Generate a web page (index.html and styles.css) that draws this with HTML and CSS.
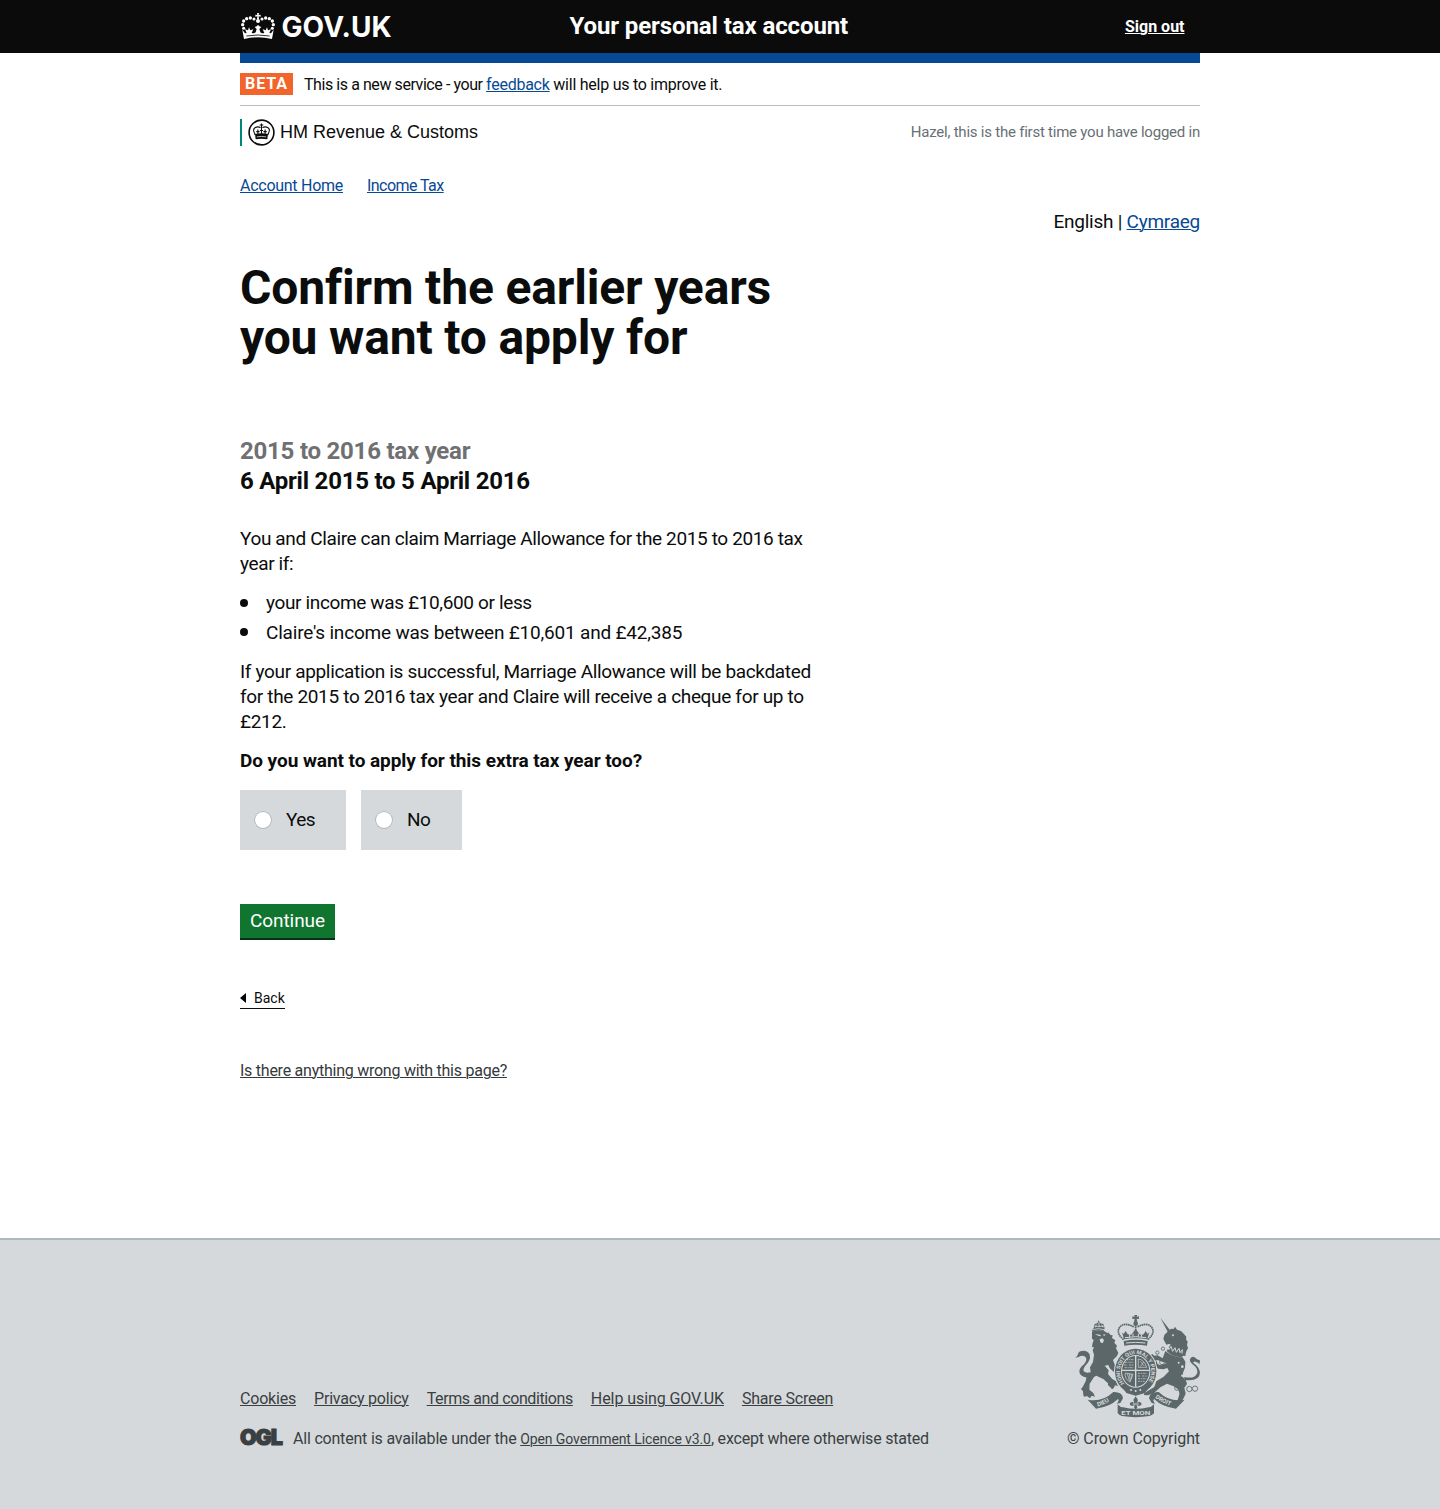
FILE: index.html
```html
<!DOCTYPE html>
<html lang="en">
<head>
<meta charset="utf-8">
<title>Confirm the earlier years you want to apply for</title>
<link rel="stylesheet" href="styles.css">
</head>
<body>
<header class="header">
  <div class="wrap header-inner">
    <a class="logo" href="#">
      <svg class="logo-crown" viewBox="32 39 102 78" aria-hidden="true">
        <defs>
          <g id="crown-half">
            <circle cx="71" cy="57" r="4.6"/><circle cx="60" cy="54" r="5"/><circle cx="49" cy="56" r="5"/><circle cx="40" cy="63" r="5"/><circle cx="37" cy="74" r="5"/><circle cx="40" cy="85" r="4.6"/>
            <path d="M83.500 76q-3.500 0-4.500 3l-6 2 6 6-3 10q-4 4-12 2l5-11-9 3-4-9-3 9-9-3 5 11-5 1-8-11 5 28q21-5 42.500-5z"/>
          </g>
        </defs>
        <g fill="#fff">
          <circle cx="83" cy="63" r="6"/><path d="M80 39h6l-1 6 6-1v6l-6-1 1 9h-6l1-9-6 1v-6l6 1z"/>
          <use href="#crown-half"/>
          <use href="#crown-half" transform="translate(166 0) scale(-1 1)"/>
        </g>
        <path d="M48 108q35-6 70 0" fill="none" stroke="#0b0c0c" stroke-width="2.5"/>
      </svg>
      <span class="logo-text">GOV.UK</span>
    </a>
    <span class="service-name">Your personal tax account</span>
    <a class="sign-out" href="#">Sign out</a>
  </div>
</header>

<div class="wrap">
  <div class="blue-bar"></div>
  <div class="phase">
    <strong class="phase-tag">BETA</strong>
    <span class="phase-text"><span class="phase-lead">This is a new service - your </span><a href="#">feedback</a> will help us to improve it.</span>
  </div>
  <div class="org-row">
    <div class="org">
      <svg class="org-crest" viewBox="0 0 27 27" aria-hidden="true">
        <circle cx="13.5" cy="13.5" r="12.4" fill="none" stroke="#0b0c0c" stroke-width="1.6"/>
        <g fill="none" stroke="#0b0c0c" stroke-width="1.1">
          <path d="M12.6 8.500C8.500 6.800 5 9 5.700 12c.3 1.600 1.100 2.600 1.500 4M14.400 8.500c4.100-1.700 7.600.5 6.900 3.500-.3 1.600-1.100 2.600-1.500 4"/>
          <path d="M13.500 4.500v12M11.700 6h3.600M9.900 10.500v5M17.100 10.500v5M8.300 12.600h3.200M15.500 12.600h3.200M11.900 11.500h3.200"/>
        </g>
        <path d="M7 15q6.500-1.500 13 0l-.7 5.200q-5.800-1-11.600 0z" fill="#0b0c0c"/>
        <path d="M8.800 17.900q4.700-1 9.400 0" fill="none" stroke="#fff" stroke-width=".7"/>
      </svg>
      <span class="org-name">HM Revenue &amp; Customs</span>
    </div>
    <span class="last-login">Hazel, this is the first time you have logged in</span>
  </div>
  <nav class="account-nav">
    <a class="nav-home" href="#">Account Home</a>
    <a class="nav-tax" href="#">Income Tax</a>
  </nav>
  <div class="languages">English | <a href="#">Cymraeg</a></div>

  <main class="content">
    <h1 class="title">Confirm the earlier years you want to apply for</h1>
    <h2 class="year"><span class="year-label">2015 to 2016 tax year</span>6 April 2015 to 5 April 2016</h2>
    <p class="text intro">You and Claire can claim Marriage Allowance for the 2015 to 2016 tax year if:</p>
    <ul class="list">
      <li class="item-own">your income was £10,600 or less</li>
      <li class="item-partner">Claire's income was between £10,601 and £42,385</li>
    </ul>
    <p class="text outcome">If your application is successful, Marriage Allowance will be backdated for the 2015 to 2016 tax year and Claire will receive a cheque for up to £212.</p>
    <p class="question">Do you want to apply for this extra tax year too?</p>
    <div class="choices">
      <label class="choice choice-yes"><input class="radio" type="radio" name="extra">Yes</label>
      <label class="choice choice-no"><input class="radio" type="radio" name="extra">No</label>
    </div>
    <button class="button">Continue</button>
    <div class="back-row"><a class="back" href="#"><svg class="back-arrow" viewBox="0 0 6 10" aria-hidden="true"><path d="M6 0v10L0 5z"/></svg>Back</a></div>
    <div class="problem"><a href="#">Is there anything wrong with this page?</a></div>
  </main>
</div>

<footer class="footer">
  <div class="wrap footer-inner">
    <div>
      <nav class="footer-links">
        <a href="#">Cookies</a>
        <a href="#">Privacy policy</a>
        <a class="terms" href="#">Terms and conditions</a>
        <a class="help" href="#">Help using GOV.UK</a>
        <a href="#">Share Screen</a>
      </nav>
      <div class="licence">
        <span class="ogl">OGL</span>
        <span>All content is available under the <a class="licence-link" href="#">Open Government Licence v3.0</a>, except where otherwise stated</span>
      </div>
    </div>
    <div class="copyright">
      <svg class="arms" viewBox="75 42 375 309" aria-hidden="true">
        <defs>
          <path id="garter" d="M223 247A47 52 0 1 1 291 247"/>
          <path id="ribbon-left" d="M143 316Q168 311 196 287"/>
          <path id="ribbon-right" d="M315 290Q344 311 374 318"/>
        </defs>
        <!-- lion -->
        <g class="ink">
          <path d="M126 88l5-7 3-12 8-2 4-9 5 9 9 2 4 12-3 9q-17-5-33 2z"/>
          <path d="M126 92q18-8 38-1l9 6 2-3 6 8 7 1-2 8 10 7-3 7 8 9-3 8 7 14-4 9-12 12 5 14q8 6 8 14l-7-2q4 7 0 13l-10-9q-8-6-10-15l-11 2 12 14-2 11 12 14 12 8 6 15-9-3q-2 9-9 12l-6-8q-7-1-6-10l-14-13-21-10-7 4-13 20-1 18 12 10 5 11-10-3-5 8-9-7q-9 5-11-2l-1-12-6-7 5-6 9-17 3-15 12-12-2-15 9-16 3-22-4-13 4-10-6 1 1-9 4-13-5-4z"/>
          <path d="M122 228q-21 5-32-9-6-12 6-24 14-12 13-22-4-11-17-8-8 5-16 5 7-5 8-11 2-9 12-9 13-4 21 7 8 13-4 29-16 17-12 25 7 7 20 3z"/>
        </g>
        <g class="paper">
          <path d="M135 99l15 2 4 5-10-2zM158 101l9-1-4 5zM149 115l8-3 5 5-4 10-7-3z"/>
          <path class="line" d="M134 76h28M139 71l-3 8M147 63v16M155 71l4 8M128 86q17-6 35 0" fill="none"/>
        </g>
        <!-- unicorn -->
        <g class="ink">
          <path d="M331 50l31 40-7 6z"/>
          <path d="M340 114l3-12 12-12 8-7 8 1 4-7 6 9 12 4 8 8 8 9-1 8 5 7-2 10 3 9-6 12-2 12-7-1-3 4q-28 2-46-18l12-20-6-1-7 2z"/>
          <path d="M346 150q24 20 52 19l8 13-1 18-6 15-1 12 10 12 3 10-8 11 4 18-7 15-12 17-11 1 7-17 5-17-5-12-13-9-20-8-20 11-18 16-19 8-12-1 1-8 15-7 15-9 6-17 22-14 16-16-5-10-12 4-16-2-8-10 2-16 5 12 8 4 18-6-12-5-15-5-8 2-8-8-9 0-3-7 9-1 3-5 7 6 10-1 15 9z"/>
          <path d="M403 228q32 7 39-13 1-14-11-22-13-10-11-18 4-11 14-6 6 8 17 10-5 10 0 15-5-11-14-12-8-2-7 4 16 10 20 27 0 30-47 24z"/>
        </g>
        <g fill="none" class="ring">
          <circle cx="381" cy="261" r="7"/><circle cx="395" cy="274" r="6"/><circle cx="418" cy="264" r="8"/><circle cx="435" cy="263" r="8"/>
          <circle cx="336" cy="184" r="7"/><circle cx="322" cy="155" r="5"/><circle cx="339" cy="143" r="5"/>
        </g>
        <path class="thin" d="M349 143l2-10 6 13 6-10 5 15 7-11 4 14 8-12 3 13 7-9-1 12" fill="none"/>
        <g class="paper">
          <circle cx="369" cy="103" r="3"/><circle cx="397" cy="197" r="4"/><circle cx="397" cy="224" r="3.500"/><circle cx="386" cy="185" r="3"/>
        </g>
        <!-- crown -->
        <g class="ink">
          <path d="M253 42h9l-2 6 7-2v8l-7-1 2 9h-10l2-9-7 1v-8l7 2z"/>
          <circle cx="257" cy="68" r="7"/>
          <path d="M216 94l6 21q35-7 70 0l6-21-5 5-6-9-6 10-11 1-6-8-7-9-7 9-6 8-11-1-6-10-6 9z"/>
          <path d="M221 120q36-7 72 0l-2 14q-34-6-68 0z"/>
        </g>
        <g fill="none" class="beads">
          <path d="M221 116Q201 100 206 84q10-20 35-11l12 5"/>
          <path d="M293 116q20-16 15-32-10-20-35-11l-12 5"/>
          <path d="M257 76v20"/>
        </g>
        <path class="thin" d="M225 110q32-6 64 0M239 97v12M275 97v12M249 98v9M265 98v9M228 126q29-4 58 0" fill="none"/>
        <!-- garter and shield -->
        <ellipse class="paper" cx="257" cy="211" rx="65" ry="71"/>
        <ellipse class="ink" cx="257" cy="211" rx="62" ry="68"/>
        <ellipse class="paper" cx="257" cy="211" rx="44" ry="49"/>
        <ellipse class="ink" cx="257" cy="211" rx="41" ry="46"/>
        <g fill="none" class="paper-line">
          <path d="M257 165v92M216 208h82" stroke-width="4"/>
          <path d="M224 184h28M222 192h10M237 192h15M228 176h24M224 200h28M264 217h28M263 225h9M276 225h16M264 233h25M264 241h20" stroke-width="2" stroke-dasharray="7 2 3 2"/>
          <path d="M265 174q18 2 25 25h-25zM271 181l12 14M281 183l-10 14" stroke-width="2"/>
          <path d="M226 216q-3 18 14 27l9-23zM232 218l6 20M238 218l3 22M244 219v15" stroke-width="2"/>
        </g>
        <path class="ink" d="M221 250l10 18 26 8 26-8 10-18 6 6-14 20-28 8-28-8-14-20z"/>
        <circle class="paper" cx="243" cy="267" r="3"/><circle class="paper" cx="257" cy="270" r="3"/><circle class="paper" cx="271" cy="267" r="3"/>
        <text class="motto garter-text" textLength="226" lengthAdjust="spacingAndGlyphs"><textPath href="#garter" textLength="226" lengthAdjust="spacingAndGlyphs">HONI SOIT QUI MAL Y PENSE</textPath></text>
        <!-- fleur and ribbon -->
        <path class="ink" d="M257 286l7 11-3 9 5-3q10-1 8 9l-7 3-7-3 2 8-5 5-5-5 2-8-7 3-7-3q-2-10 8-9l5 3-3-9z"/>
        <path class="thin" d="M248 309h18" fill="none"/>
        <g class="ink">
          <path d="M113 296q45 8 77-23 27-1 29 19l-8 14-11 2q9-9 4-14-25 24-66 29z"/>
          <path d="M404 296q-46 8-78-23-27-1-29 19l8 14 11 2q-9-9-4-14 25 24 66 29z"/>
          <path d="M203 310q9 10 17 9 36 9 76 0 8 0 16-9v27q-6 7-14 8-41 7-82 0-8-2-13-9z"/>
        </g>
        <text class="motto"><textPath href="#ribbon-left">DIEU</textPath></text>
        <text class="motto"><textPath href="#ribbon-right">DROIT</textPath></text>
        <text class="motto" x="214" y="342" textLength="87" lengthAdjust="spacingAndGlyphs">ET MON</text>
      </svg>
      <span>© Crown Copyright</span>
    </div>
  </div>
</footer>
</body>
</html>
```
FILE: styles.css
```css
* { box-sizing: border-box; }
body { margin: 0; background: #fff; color: #0b0c0c; font: 19px/25px Roboto, Arial, sans-serif; letter-spacing: -0.34px; }
h1, h2, p, ul { margin: 0; padding: 0; }
a { color: #074994; text-decoration: underline; text-decoration-thickness: 1px; text-underline-offset: 1px; }
.wrap { width: 960px; margin: 0 auto; }

.header { height: 53px; background: #0b0b0b; color: #fff; }
.header a { color: #fff; }
.header-inner { display: flex; align-items: center; height: 53px; }
.logo { display: flex; align-items: center; width: 329.5px; gap: 6.5px; text-decoration: none; }
.logo-crown { width: 34px; height: 26px; margin: -1px 0 0 1px; }
.logo-text { font: 700 28px/30px Inter, sans-serif; letter-spacing: 0.1px; }
.service-name { flex: 1; font-size: 24px; font-weight: 700; letter-spacing: -0.1px; }
.sign-out { margin: -1px 15.500px 0 0; font-size: 16px; font-weight: 700; letter-spacing: 0; }

.blue-bar { height: 10px; background: #074994; }
.phase { display: flex; align-items: center; gap: 11px; height: 43px; border-bottom: 1px solid #b9bcbe; font-size: 16px; letter-spacing: -0.25px; }
.phase-tag { width: 53px; height: 22px; background: #f2642c; color: #fff; text-align: center; line-height: 22px; letter-spacing: 0.9px; }
.phase-lead { letter-spacing: -0.43px; }
.org-row { display: flex; justify-content: space-between; align-items: center; height: 27px; margin-top: 13px; }
.org { display: flex; align-items: center; height: 27px; padding-left: 5.5px; border-left: 2px solid #00857c; }
.org-crest { width: 27px; height: 27px; margin-right: 5.5px; }
.org-name { font: 18px/27px "Liberation Sans", Arial, sans-serif; letter-spacing: 0; color: #0b0c0c; }
.last-login { font-size: 15px; letter-spacing: -0.23px; color: #686f74; }
.account-nav { display: flex; gap: 24px; margin-top: 27px; font-size: 16px; line-height: 25px; }
.nav-home { letter-spacing: -0.27px; }
.nav-tax { letter-spacing: -0.55px; }
.languages { margin-top: 11px; text-align: right; letter-spacing: -0.25px; }

.content { width: 585px; }
.title { width: 560px; margin-top: 29px; font-size: 48px; line-height: 50px; font-weight: 700; letter-spacing: -0.16px; }
.year { margin-top: 73px; font-size: 24px; line-height: 30px; font-weight: 700; letter-spacing: -0.23px; }
.year-label { display: block; color: #6f7072; }
.intro { margin-top: 30px; letter-spacing: -0.365px; }
.list { margin-top: 14px; list-style: none; }
.list li { display: flex; align-items: center; gap: 18px; }
.list li + li { margin-top: 4.5px; }
.list li::before { content: ""; width: 8px; height: 8px; border-radius: 50%; background: #0b0c0c; }
.item-own { letter-spacing: -0.36px; }
.item-partner { letter-spacing: -0.2px; }
.outcome { margin-top: 14.5px; letter-spacing: -0.33px; }
.question { margin-top: 14px; font-weight: 700; letter-spacing: -0.06px; }
.choices { display: flex; gap: 15px; margin-top: 17px; }
.choice { display: flex; align-items: center; gap: 15px; height: 60px; padding: 0 0 1px 15px; background: #d5d9db; letter-spacing: -0.6px; }
.choice-yes { width: 106px; }
.choice-no { width: 101px; }
.radio { appearance: none; width: 16px; height: 16px; margin: 0; border-radius: 50%; background: #fff; box-shadow: 0 0 0 0.7px #a9adaf; }
.button { display: block; width: 95px; height: 36px; margin: 54px 0 0; padding: 0 0 1px; border: 0; border-bottom: 2px solid #06301a; background: #10752f; color: #fff; font: 19px/33px Roboto, Arial, sans-serif; letter-spacing: -0.07px; }
.back-row { height: 74px; padding-top: 44px; }
.back { display: inline-flex; align-items: center; gap: 8px; height: 20px; border-bottom: 1px solid #0b0c0c; color: #0b0c0c; font-size: 14px; line-height: 18px; letter-spacing: 0; text-decoration: none; }
.back-arrow { width: 6px; height: 10px; }
.problem { margin-top: 44px; font-size: 16px; line-height: 25px; letter-spacing: -0.25px; }
.problem a { color: #35393c; }

.footer { height: 271px; margin-top: 155px; border-top: 2px solid #b0b8bb; background: #d5d9db; color: #3a3f42; font-size: 16px; line-height: 20px; letter-spacing: -0.2px; }
.footer a { color: #3a3f42; }
.footer-inner { display: flex; justify-content: space-between; align-items: flex-end; height: 209px; }
.footer-links { display: flex; gap: 18px; }
.terms { letter-spacing: -0.4px; }
.help { letter-spacing: -0.07px; }
.licence { display: flex; align-items: center; gap: 10px; margin-top: 20px; }
.ogl { width: 43px; font: 900 21.500px/20px Inter, sans-serif; letter-spacing: -1.1px; -webkit-text-stroke: 1.1px #3a3f42; margin-top: -4px; }
.licence-link { font-size: 14px; letter-spacing: -0.1px; }
.copyright { display: flex; flex-direction: column; align-items: flex-end; gap: 11px; letter-spacing: -0.09px; }
.arms { width: 125px; height: 103px; }
.ink { fill: #5b6769; }
.paper { fill: #d5d9db; }
.line { stroke: #d5d9db; stroke-width: 2.5; }
.thin { stroke: #d5d9db; stroke-width: 3; }
.paper-line { stroke: #d5d9db; }
.ring { stroke: #5b6769; stroke-width: 2.5; }
.beads { stroke: #5b6769; stroke-width: 5; stroke-dasharray: 5 1.5; }
.motto { fill: #d5d9db; font: 700 18px Roboto, sans-serif; letter-spacing: 0; }
.garter-text { font-size: 16px; }
```
